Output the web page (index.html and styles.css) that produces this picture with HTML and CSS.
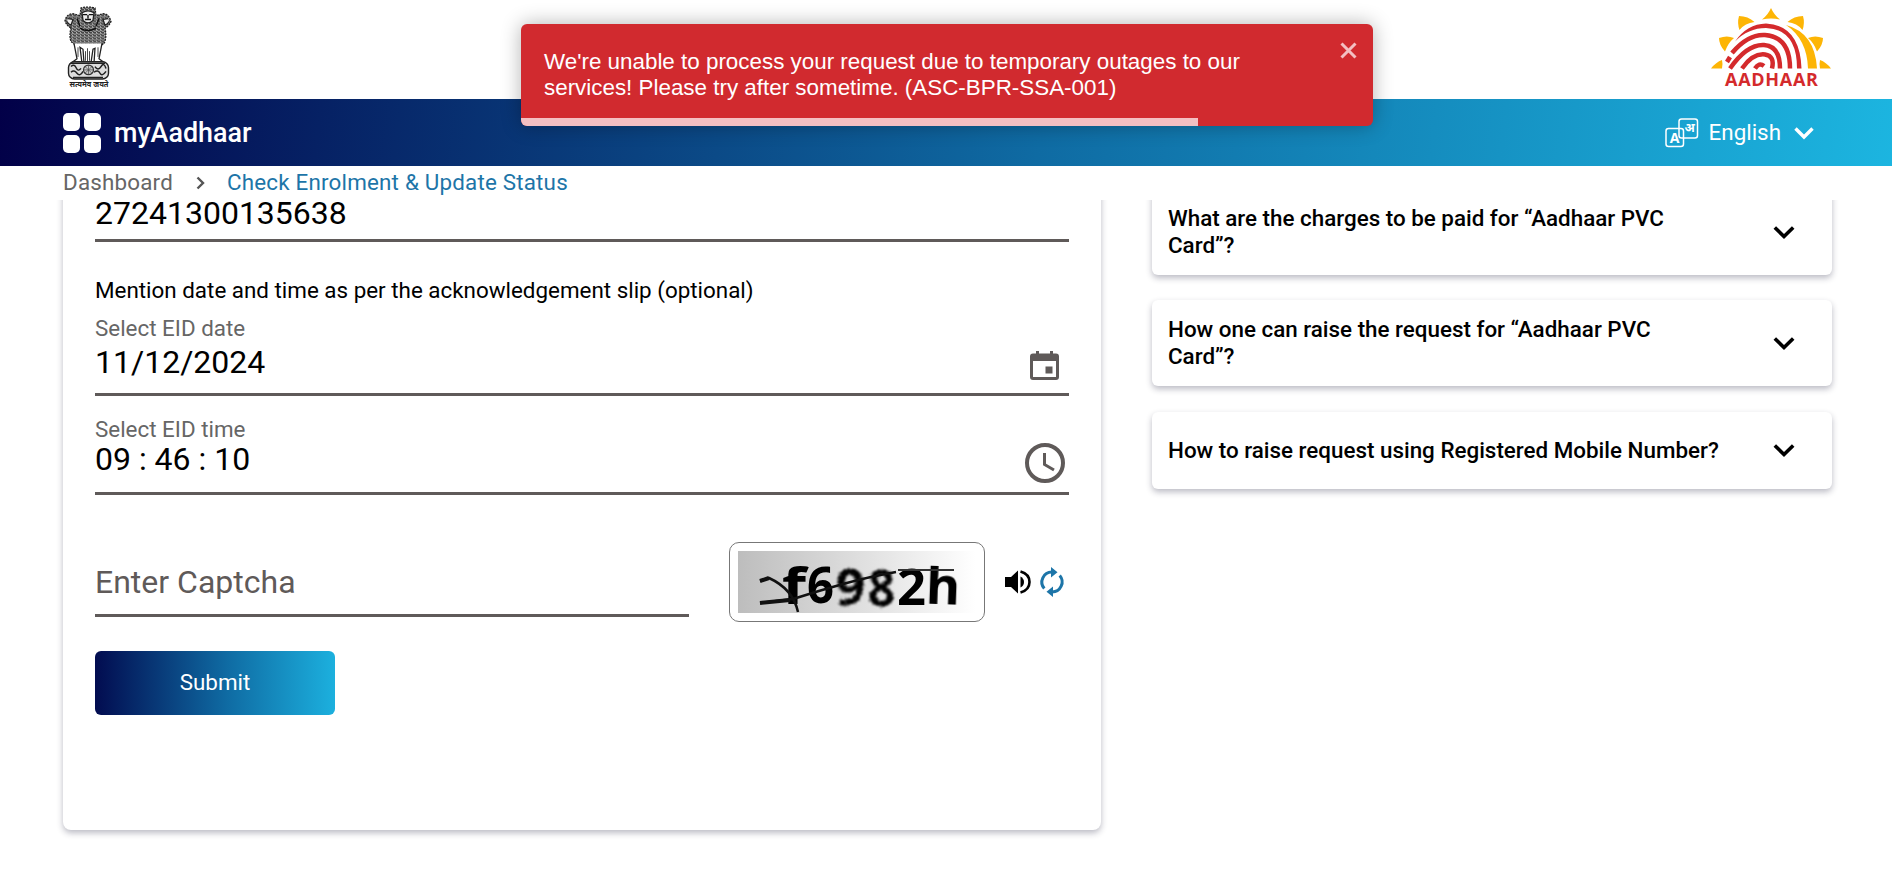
FILE: index.html
```html
<!DOCTYPE html>
<html lang="en">
<head>
<meta charset="utf-8">
<title>myAadhaar</title>
<link rel="stylesheet" href="styles.css">
</head>
<body>
<header class="masthead">
  <svg class="emblem" viewBox="0 0 50 84" width="50" height="84">
    <defs>
      <pattern id="fur" width="4" height="3" patternUnits="userSpaceOnUse">
        <rect width="4" height="3" fill="#444"/>
        <path d="M0 1.5L2 .4L4 1.5M1 3L2 2" stroke="#ccc" stroke-width=".8" fill="none"/>
      </pattern>
    </defs>
    <g transform="scale(1 .96)">
      <path d="M8 22Q3 19 2 14Q4 7 10 7L17 9L18 1Q25-1 32 1L33 9L40 7Q46 7 48 15Q46 20 42 22Q44 32 41 38L36 41Q25 46 13 40L8 36Q6 30 8 22Z" fill="url(#fur)"/>
      <path d="M8 22Q3 19 2 14Q4 7 10 7L17 9L18 1Q25-1 32 1L33 9L40 7Q46 7 48 15Q46 20 42 22Q44 32 41 38L36 41Q25 46 13 40L8 36Q6 30 8 22Z" fill="none" stroke="#222" stroke-width="1.300" stroke-dasharray="2 1"/>
      <path d="M19 6Q25 2 31 6L30 14Q25 19 20 14ZM5 12l5 1l-2 6q-3-1-4-4M45 12l-5 1l2 6q3-1 4-4" fill="#eee" stroke="#222" stroke-width="1.300"/>
      <path d="M20 8h4M26 8h4M22 13h6M25 8V12M14 12L17 20M36 12L33 20M17 22Q25 27 33 22" fill="none" stroke="#111" stroke-width="1.400"/>
      <path d="M11 38L14 54L8 58.500H19L17 42L20 44L21 58H28L30 44L32 43L31 58.500H42L36 54L39 38" fill="#fff" stroke="#222" stroke-width="1.300"/>
      <path d="M15 42V52M24.500 43V57M22.500 46V56M26.500 46V56M35 42V52" stroke="#444" stroke-width="1"/>
      <rect x="5.500" y="57" width="40" height="18" rx="6" fill="#ddd" stroke="#222" stroke-width="1.400"/>
      <path d="M8 62q3-3 5 1q2 5 5 1M8 68q3-3 6 1t6-2M32 62q3 5 6 0t5 2M31 68q4-3 6 1t6-2M8 58.500H42M10 73.500H40" fill="none" stroke="#222" stroke-width="1.500"/>
      <circle cx="25.500" cy="65.500" r="5" fill="#ccc" stroke="#333" stroke-width="1.200"/>
      <path d="M25.500 60.500V70.500M20.500 65.500H30.500M22 62L29 69M29 62L22 69" stroke="#444" stroke-width=".7"/>
    </g>
    <text x="26" y="79.500" class="motto" text-anchor="middle" textLength="39" lengthAdjust="spacingAndGlyphs">सत्यमेव जयते</text>
  </svg>
  <svg class="logo" viewBox="0 0 122 80" width="122" height="80">
    <g fill="#fdb505">
      <path d="M52 11.500Q58 7 61 0Q64 7 70 11.500Q61 9.500 52 11.500Z"/>
      <path d="M29 8Q38 8 44.500 14Q35 15 29.500 22Q27 15 29 8Z"/>
      <path d="M93 8Q84 8 77.500 14Q87 15 92.500 22Q95 15 93 8Z"/>
      <path d="M9 30Q17 27 24 30Q18 35 15 43.500Q9 37 9 30Z"/>
      <path d="M113 30Q105 27 98 30Q104 35 107 43.500Q113 37 113 30Z"/>
      <path d="M1 60.500Q6 54 12 52Q13 56 12 60.500Z"/>
      <path d="M121 60.500Q116 54 110 52Q109 56 110 60.500Z"/>
      <path d="M76 17Q105 25 107 60.500H98Q97 31 76 17Z"/>
    </g>
    <g fill="none" stroke="#d42a2c" stroke-width="4.500">
      <path d="M22 45Q38 26 55 27Q80 29 80 60.500"/>
      <path d="M20 60.500Q37 36 54 37Q70 38 70 60.500"/>
      <path d="M32 60.500Q43 45 55 46.500Q65 48 62 60.500"/>
      <path d="M45 60.500Q49 54 54 58"/>
      <path d="M17 54L20 49"/>
    </g>
    <path d="M25 33.500Q37 16 56 15.500Q90 17 91.500 60.500H87Q87 21 56 20Q38 20 25 33.500Z" fill="#d42a2c"/>
    <text class="logo-text" x="61.500" y="77.500" text-anchor="middle" textLength="93">AADHAAR</text>
  </svg>
</header>
<nav class="navbar">
  <a class="brand"><span class="tiles"><i></i><i></i><i></i><i></i></span>myAadhaar</a>
  <div class="language">
    <svg viewBox="0 0 34 30" width="34" height="30" fill="none" stroke="#fff" stroke-width="1.500">
      <rect x="14" y="1" width="18.500" height="19" rx="2.500"/>
      <rect x="1" y="10.500" width="17.500" height="18" rx="2.500"/>
      <text class="glyph-a" x="9.700" y="24.500" text-anchor="middle">A</text>
      <text class="glyph-hi" x="24.500" y="14" text-anchor="middle">अ</text>
    </svg>
    <span>English</span>
    <svg class="caret" viewBox="0 0 20 13" width="20" height="13"><path d="M1.500 1.500L10 10L18.500 1.500" fill="none" stroke="#fff" stroke-width="3.400"/></svg>
  </div>
</nav>
<div class="breadcrumb">
  <span>Dashboard</span>
  <svg viewBox="0 0 9 14" width="9" height="14"><path d="M1.500 1.500L7 7L1.500 12.500" fill="none" stroke="#555" stroke-width="2.400"/></svg>
  <span class="current">Check Enrolment &amp; Update Status</span>
</div>
<main class="content">
  <section class="form-card">
    <div class="field eid"><span class="value">27241300135638</span></div>
    <p class="note">Mention date and time as per the acknowledgement slip (optional)</p>
    <div class="field date">
      <div><label>Select EID date</label><span class="value">11/12/2024</span></div>
      <svg class="calendar" viewBox="0 0 29 29" width="29" height="29" fill="#5f5a59">
        <path fill-rule="evenodd" d="M6 0H9V2.500H20V0H23V2.500H26Q29 2.500 29 5.500V26Q29 29 26 29H3Q0 29 0 26V5.500Q0 2.500 3 2.500H6ZM3 10V26H26V10Z"/>
        <rect x="15.500" y="15.500" width="7" height="7"/>
      </svg>
    </div>
    <div class="field time">
      <div><label>Select EID time</label><span class="value">09 : 46 : 10</span></div>
      <svg class="clock" viewBox="0 0 40 40" width="40" height="40" fill="none" stroke="#5f5a59">
        <circle cx="20" cy="20" r="18" stroke-width="4"/><path d="M19.500 10V21.500L29 27" stroke-width="3"/>
      </svg>
    </div>
    <div class="captcha-row">
      <div class="field captcha"><span class="placeholder">Enter Captcha</span></div>
      <div class="captcha-box">
        <svg viewBox="0 0 238 62" width="238" height="62">
          <defs>
            <linearGradient id="cg"><stop stop-color="#bdbdbd"/><stop offset="1" stop-color="#fff"/></linearGradient>
            <filter id="soft" x="-10%" y="-10%" width="120%" height="120%"><feTurbulence type="fractalNoise" baseFrequency=".8" numOctaves="1" seed="4"/><feDisplacementMap in="SourceGraphic" scale="7" xChannelSelector="R" yChannelSelector="G"/><feGaussianBlur stdDeviation=".8"/></filter>
            <filter id="smooth"><feGaussianBlur stdDeviation=".7"/></filter>
          </defs>
          <rect width="238" height="62" fill="url(#cg)"/>
          <g class="captcha-text">
            <text x="44" y="53" textLength="24" lengthAdjust="spacingAndGlyphs" filter="url(#smooth)">f</text>
            <text x="69" y="52" textLength="27" lengthAdjust="spacingAndGlyphs" filter="url(#smooth)">6</text>
            <text x="98" y="54" textLength="29" lengthAdjust="spacingAndGlyphs" filter="url(#soft)">9</text>
            <text x="130" y="55" textLength="27" lengthAdjust="spacingAndGlyphs" filter="url(#soft)">8</text>
            <text x="159" y="54" textLength="29" lengthAdjust="spacingAndGlyphs" filter="url(#smooth)">2</text>
            <text x="188" y="53" textLength="34" lengthAdjust="spacingAndGlyphs" filter="url(#smooth)" transform="rotate(2 200 40)">h</text>
          </g>
          <path d="M22 52L55 48Q80 40 105 33T158 21" fill="none" stroke="#111" stroke-width="2.500"/><path d="M22 52L52 49" stroke="#111" stroke-width="4"/>
          <path d="M22 30L31 27Q55 38 60 61" fill="none" stroke="#111" stroke-width="2.500"/><path d="M22 30L31 27" stroke="#111" stroke-width="4"/><path d="M160 19H216" stroke="#333" stroke-width="2"/>
        </svg>
      </div>
      <svg class="speaker" viewBox="0 0 26 24" width="26" height="24"><path d="M0 7H6L13 .5V23.500L6 17H0Z"/><path d="M15.500 1.500Q24.500 4 24.500 12T15.500 22.500" fill="none" stroke="#000" stroke-width="2.600"/><path d="M15.500 6.500Q19 8.500 19 12T15.500 17.500Z"/></svg>
      <svg class="refresh" viewBox="0 0 24 30" width="24" height="30" fill="none" stroke="#1d75a8" stroke-width="3"><path d="M4.300 21.500A10 10 0 0 1 12 5M19.700 8.500A10 10 0 0 1 12 25"/><path d="M11 0L17.500 5.200L11 10.500ZM13 19.500L6.500 24.800L13 30Z" fill="#1d75a8" stroke="none"/></svg>
    </div>
    <button class="submit">Submit</button>
  </section>
  <aside class="faq">
    <div class="faq-item"><span>What are the charges to be paid for “Aadhaar PVC<br>Card”?</span><svg viewBox="0 0 22 13" width="22" height="13"><path d="M1.800 1.500L11 10.500L20.200 1.500" fill="none" stroke="#000" stroke-width="3.600"/></svg></div>
    <div class="faq-item"><span>How one can raise the request for “Aadhaar PVC<br>Card”?</span><svg viewBox="0 0 22 13" width="22" height="13"><path d="M1.800 1.500L11 10.500L20.200 1.500" fill="none" stroke="#000" stroke-width="3.600"/></svg></div>
    <div class="faq-item single"><span>How to raise request using Registered Mobile Number?</span><svg viewBox="0 0 22 13" width="22" height="13"><path d="M1.800 1.500L11 10.500L20.200 1.500" fill="none" stroke="#000" stroke-width="3.600"/></svg></div>
  </aside>
</main>
<div class="toast" role="alert">
  <p>We're unable to process your request due to temporary outages to our services! Please try after sometime. (ASC-BPR-SSA-001)</p>
  <svg class="close" viewBox="0 0 17 17" width="17" height="17"><path d="M1.500 1.500L15.500 15.500M15.500 1.500L1.500 15.500" stroke="#f3bfc2" stroke-width="3"/></svg>
  <div class="progress"></div>
</div>
</body>
</html>
```
FILE: styles.css
```css
* { box-sizing: border-box; }
body { margin: 0; height: 871px; overflow: hidden; background: #fff; color: #000; font-family: Roboto, sans-serif; font-size: 22.4px; }
p { margin: 0; }
svg { display: block; flex: none; overflow: visible; }
.masthead { height: 99px; display: flex; justify-content: space-between; padding: 7px 60px 0 63px; }
.logo { margin-top: 1px; }
.motto { font: bold 8px "Noto Sans Devanagari", "Noto Sans", sans-serif; fill: #222; }
.logo-text { font: bold 18px "Open Sans", sans-serif; fill: #d42a2c; }
.navbar { height: 67px; display: flex; align-items: center; justify-content: space-between; padding: 0 78px 0 63px; color: #fff; background: linear-gradient(97deg, #020048 0%, #0f6ba3 55%, #1cb5e0 100%); }
.brand { display: flex; align-items: center; gap: 13px; font-size: 26.9px; font-weight: 500; }
.tiles { display: grid; grid-template-columns: 17px 17px; gap: 4px; }
.tiles i { height: 18px; border-radius: 5px; background: #fff; }
.language { display: flex; align-items: center; gap: 10px; }
.language span { padding-bottom: 2px; }
.language .caret { margin: 2px 0 0 3px; }
.glyph-a { font: bold 14px "Open Sans", sans-serif; fill: #fff; stroke: none; }
.glyph-hi { font: bold 12px "Noto Sans Devanagari", "Noto Sans", sans-serif; fill: #fff; stroke: none; }
.breadcrumb { height: 34px; display: flex; align-items: center; padding: 0 0 2px 63px; color: #666; letter-spacing: .19px; }
.breadcrumb svg { margin: 2px 22px 0 23px; }
.current { color: #1d75a8; }
.content { height: 671px; overflow: hidden; display: flex; gap: 51px; padding: 0 60px 0 63px; }
.form-card { width: 1038px; height: 650px; margin-top: -20px; padding: 20px 32px 0; border-radius: 8px; box-shadow: 0 3px 6px rgba(30, 30, 60, .3); }
.field { border-bottom: 3px solid #5f5a59; display: flex; justify-content: space-between; }
.value { display: block; font-size: 32px; line-height: 36px; }
label { display: block; color: #666; line-height: 26px; }
.eid { height: 42px; }
.eid .value { line-height: 27px; }
.note { margin-top: 35px; line-height: 26px; }
.date { height: 93px; padding-top: 12px; }
.date .value { margin-top: 3px; }
.calendar { margin: 36px 10px 0 0; }
.time { height: 99px; padding-top: 20px; }
.clock { margin: 27px 4px 0 0; }
.time .value { margin-top: -1px; }
.captcha-row { display: flex; margin-top: 47px; height: 80px; }
.captcha { width: 594px; height: 75px; color: #5f5a59; font-size: 32px; padding-top: 21px; }
.captcha-box { width: 256px; height: 80px; margin-left: 40px; border: 1px solid #777; border-radius: 10px; padding: 8px; }
.speaker { margin: 28px 0 0 20px; }
.refresh { margin: 25px 0 0 9px; }
.captcha-text { font: bold 50px "Noto Sans", sans-serif; }
.submit { display: block; width: 240px; height: 64px; margin-top: 29px; padding: 0 0 2px; border: 0; border-radius: 6px; color: #fff; font: 22.4px Roboto, sans-serif; background: linear-gradient(90deg, #020c50, #0f6ba3 55%, #1cb0de); }
.faq { width: 680px; margin-top: -11px; display: flex; flex-direction: column; gap: 25px; }
.faq-item { flex: none; height: 86px; padding: 0 37px 0 16px; display: flex; align-items: center; justify-content: space-between; border-radius: 6px; font-weight: 500; line-height: 27px; box-shadow: 0 3px 6px rgba(30, 30, 60, .3); white-space: nowrap; }
.faq-item span { padding-bottom: 1px; }
.single { height: 77px; margin-top: 1px; }
.toast { position: absolute; left: 521px; top: 24px; width: 852px; height: 102px; border-radius: 6px; overflow: hidden; background: #d12a2f; color: #fff; font: 22.4px/26px "Liberation Sans", sans-serif; padding: 25px 23px; display: flex; justify-content: space-between; box-shadow: 0 0 20px rgba(0, 0, 0, .3); }
.toast p { width: 720px; }
.close { margin: -7px -7px 0 0; }
.progress { position: absolute; left: 0; bottom: 0; width: 677px; height: 8px; background: #f3bfc2; }
```
